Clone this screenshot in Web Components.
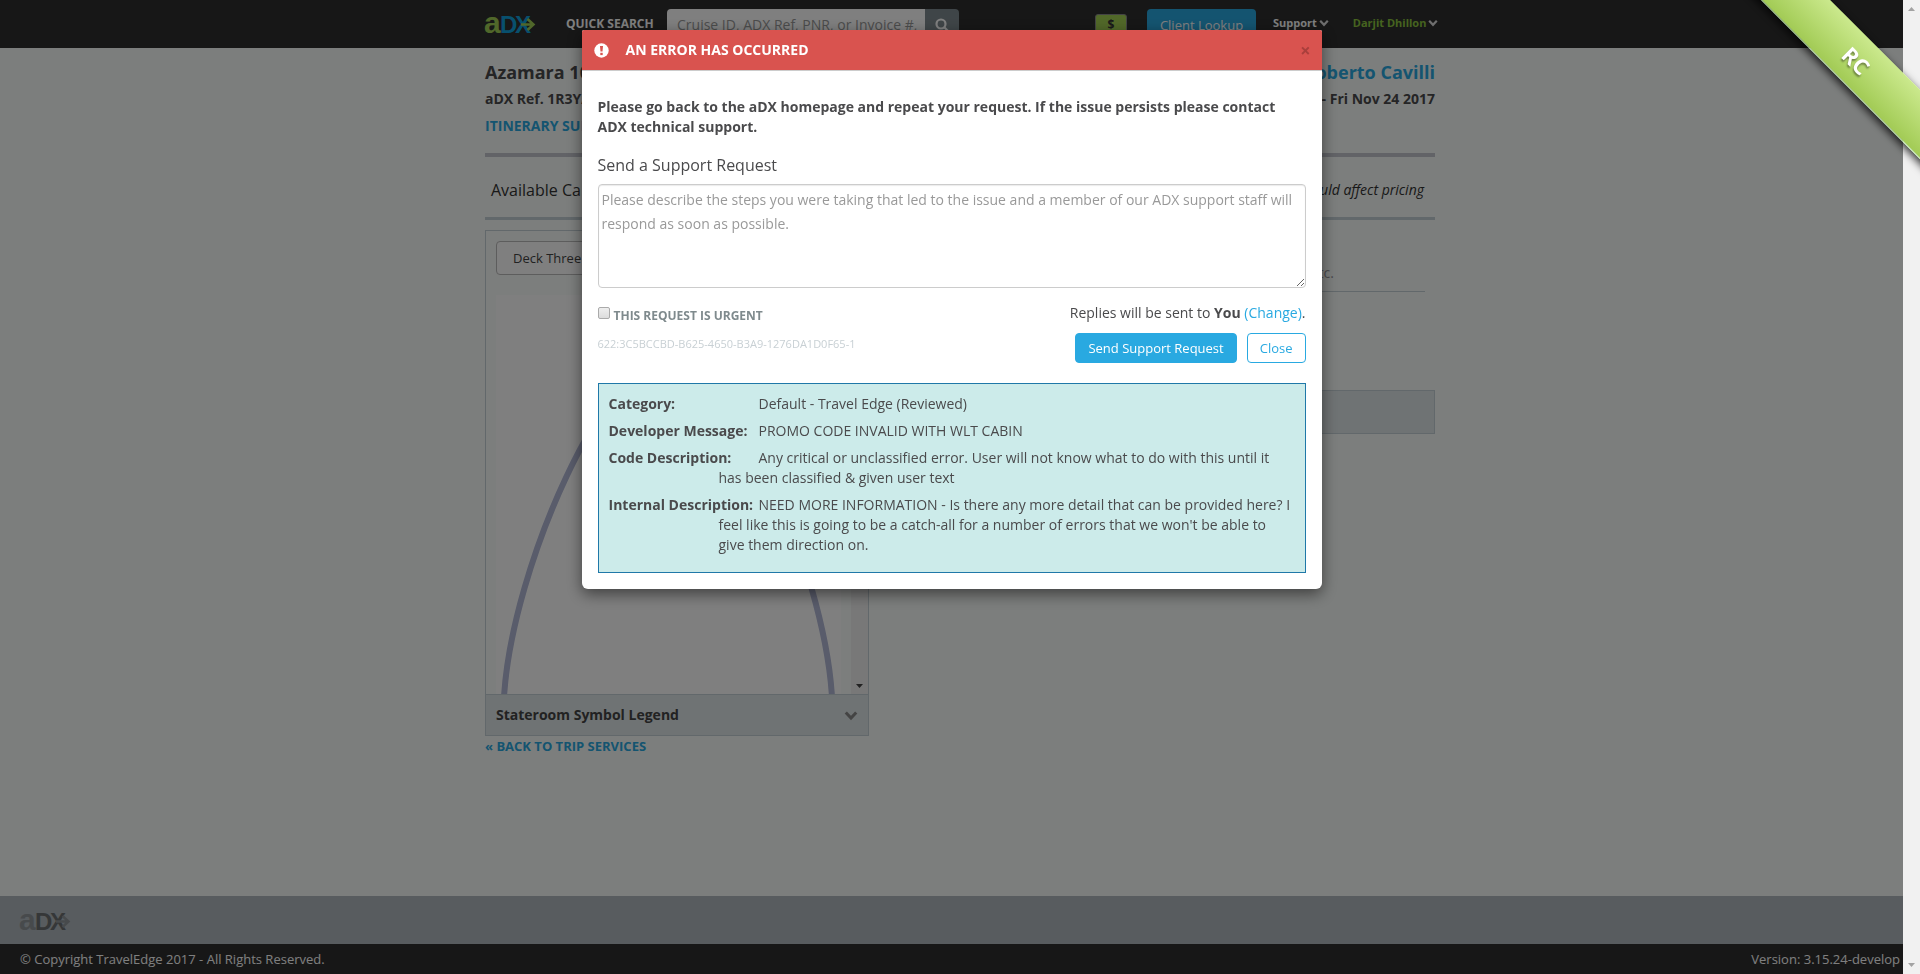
<!DOCTYPE html>
<html lang="en">
<head>
<meta charset="utf-8">
<title>aDX - Cabin Selection</title>
<style>
body{margin:0;background:#f9fcfa;font:14px/20px "Open Sans","Noto Sans",sans-serif;color:#4a4a4c}
</style>
</head>
<body>
<adx-app></adx-app>
<script>
const base = '<style>*{box-sizing:border-box}a{color:#29a9e1;text-decoration:none}button,input,textarea{font:inherit;margin:0}</style>';
function define(name, html) {
  const tpl = document.createElement('template');
  tpl.innerHTML = base + html;
  customElements.define(name, class extends HTMLElement {
    constructor() {
      super();
      this.attachShadow({mode: 'open'}).append(tpl.content.cloneNode(true));
    }
  });
}

define('adx-logo', `
<style>
:host{display:block;flex:none;width:52px;height:20px;--a:var(--logo-a,#a1cf54);--d:var(--logo-d,#10a0dc)}
svg{display:block;overflow:visible;font-family:"Liberation Sans",sans-serif;font-weight:bold}
.a{fill:var(--a)}.d{fill:var(--d)}
path{fill:none;stroke:var(--a);stroke-width:2.5}
</style>
<svg width="52" height="20" role="img" aria-label="aDX"><text class="a" x="-1" y="18" font-size="30">a</text><text class="d" x="15" y="18" font-size="24">D</text><text class="d" x="30" y="18" font-size="24">X</text><path d="M36 9.5H48M42.500 4L48.500 9.500L42.500 15"/></svg>`);

define('adx-chevron', `
<style>:host{display:inline-block;width:10px;height:8px}svg{display:block;width:100%;height:100%}</style>
<svg viewBox="0 0 10 8"><path d="M1.200 1.800L5 5.800L8.800 1.800" fill="none" stroke="currentColor" stroke-width="2.200"/></svg>`);

define('adx-header', `
<style>
:host{display:block;background:#2e2e2e;height:48px}
.bar{width:950px;max-width:100%;margin:0 auto;display:flex;align-items:flex-start;padding-top:9px;color:#fff}
.bar>*{flex:none}
adx-logo{margin-top:6px}
label{margin-left:29px;line-height:30px;width:101px;font-weight:bold;font-size:12px;white-space:nowrap;color:#fff}
input{width:258px;height:31px;border:0;border-radius:4px 0 0 4px;background:#fff;padding:0 0 0 10px;font-size:14px}
input::placeholder{color:#999;opacity:1}
.go{width:34px;height:31px;border:0;border-radius:0 4px 4px 0;background:#7f8b90;padding:0;color:#fff}
.go svg{display:block;margin:auto}
.cash{margin:5px 20px 0 136px;width:32px;height:22px;border:1px solid #888;border-radius:3px;background:#a3d052;color:#333;font-weight:bold;font-size:12px;padding:0}
.client{width:109px;height:31px;border:0;border-radius:4px;background:#29a9e1;color:#fff;font-size:13px;padding:0}
nav{display:flex;gap:24px;margin-left:17px}
nav a{display:flex;align-items:center;gap:2px;color:#fff;font-weight:bold;font-size:11px;line-height:28px;white-space:nowrap}
nav a.user{color:#8cc63f}
nav adx-chevron{color:#ddd}
</style>
<div class="bar">
<adx-logo></adx-logo>
<label for="q">QUICK SEARCH</label>
<input id="q" type="text" placeholder="Cruise ID, ADX Ref, PNR, or Invoice #,">
<button class="go" aria-label="Search"><svg width="14" height="14" viewBox="0 0 14 14" fill="none" stroke="#fff" stroke-width="2.200"><circle cx="6" cy="6" r="4.500"/><path d="M9 9L13 13"/></svg></button>
<button class="cash">$</button>
<button class="client">Client Lookup</button>
<nav><a href="#">Support<adx-chevron></adx-chevron></a><a class="user" href="#">Darjit Dhillon<adx-chevron></adx-chevron></a></nav>
</div>`);

define('adx-booking', `
<style>
:host{display:block}
.row{display:flex;justify-content:space-between;gap:20px}
.title{font-size:18px;line-height:28px;font-weight:bold}
.ref{font-weight:bold;line-height:26px}
.tabs{font-weight:bold;line-height:28px;padding-bottom:13px;border-bottom:4px solid #c4c6ce}
.avail{align-items:center;height:63px;border-bottom:3px solid #c4d0d6;padding:6px 11px 0 6px;color:#333}
h2{margin:0;font-size:16px;font-weight:normal}
</style>
<div class="row title"><span>Azamara 10</span><a href="#">Roberto Cavilli</a></div>
<div class="row ref"><span>aDX Ref. 1R3YA</span><span>- Fri Nov 24 2017</span></div>
<div class="tabs"><a href="#">ITINERARY SUM</a></div>
<div class="row avail"><h2>Available Ca</h2><em>could affect pricing</em></div>`);

define('adx-deck', `
<style>
:host{display:block;border:1px solid #c4d0d6}
.pick{padding:10px 10px 20px}
.pick button{display:block;width:200px;height:34px;border:1px solid #bbb;border-radius:4px;background:#fff;text-align:left;padding:0 16px;font-size:13px;color:#444}
.view{display:flex;justify-content:space-between;padding-left:10px;height:399px}
.view svg{display:block}
.plan{background:#fff}
.track{width:17px;background:#f1f1f1;display:flex;justify-content:center;align-items:flex-end;padding-bottom:6px}
.legend{display:flex;justify-content:space-between;align-items:center;width:100%;height:41px;padding:0 10px;border:0;border-top:1px solid #c4d0d6;background:#dfe6e8;font-weight:bold;color:#444}
adx-chevron{width:14px;height:11px;color:#888}
</style>
<div class="pick"><button>Deck Three</button></div>
<div class="view">
<svg class="plan" width="345" height="399"><path d="M8 402C16 270 112 60 172 60C232 60 328 270 336 402" fill="none" stroke="#b2b8d6" stroke-width="6"/></svg>
<div class="track"><svg width="7" height="4"><path d="M0 0H7L3.500 4Z" fill="#444"/></svg></div>
</div>
<button class="legend">Stateroom Symbol Legend<adx-chevron></adx-chevron></button>`);

define('adx-details', `
<style>
:host{display:block}
p{margin:0 10px 98px 0;padding-bottom:8px;border-bottom:1px solid #c4d0d6;text-align:right;padding-right:91px;color:#96969c}
div{height:44px;border:1px solid #c4d0d6;background:#dfe6e8}
</style>
<p>etc.</p>
<div></div>`);

define('adx-footer', `
<style>
:host{display:block;font-size:13px}
.brand{height:48px;background:#b0b8be;padding:16px 20px;--logo-a:#8f9499;--logo-d:#6b6e70}
.legal{display:flex;justify-content:space-between;height:30px;line-height:30px;background:#2e2e2e;color:#fff;padding:0 20px}
</style>
<div class="brand"><adx-logo></adx-logo></div>
<div class="legal"><span>© Copyright TravelEdge 2017 - All Rights Reserved.</span><span>Version: 3.15.24-develop</span></div>`);

define('adx-field', `
<style>
:host{display:block;padding-left:110px;text-indent:-110px;margin-bottom:7px}
b{display:inline-block;width:150px;text-indent:0}
</style>
<b><slot name="label"></slot></b><slot></slot>`);

define('adx-error-dialog', `
<style>
:host{display:block;width:740px;max-width:100%;background:#fff;border-radius:2px 2px 6px 6px;box-shadow:0 5px 15px rgba(0,0,0,.5)}
header{display:flex;align-items:center;height:41px;background:#d9534f;border-bottom:1px solid #ccc;border-radius:2px 2px 0 0;padding:0 11px 0 12px;color:#fff}
header svg{flex:none}
h1{margin:0 0 0 17px;flex:1;font-size:14px}
.x{border:0;background:none;padding:0;font-size:18px;line-height:20px;height:24px;font-weight:bold;color:#a93f3c}
.body{padding:26px 16px 16px}
.lead{margin:0 0 18px;font-weight:bold}
.ask{display:block;font-size:16px;line-height:20px;margin-bottom:9px}
textarea{display:block;width:100%;height:104px;border:1px solid #ccc;border-radius:4px;padding:3px;line-height:24px;box-shadow:inset 0 1px 1px rgba(0,0,0,.08)}
textarea::placeholder{color:#999;opacity:1}
.foot{display:flex;justify-content:space-between;margin:15px 0 20px}
.urgent{display:flex;gap:4px;font-size:12px;line-height:26px;font-weight:bold;color:#7f8a8d}
.urgent input{appearance:none;width:12px;height:12px;margin-top:4px;border:1px solid #aaa;border-radius:2px;background:linear-gradient(#eee,#dcdcdc)}
.id{margin-top:7px;font-size:11px;line-height:16px;color:#c8d0d4}
.right{text-align:right}
.btns{display:flex;justify-content:flex-end;gap:10px;margin-top:10px}
.btns button{height:30px;border:1px solid #29a9e1;border-radius:4px;background:#fff;color:#29a9e1;font-size:13px;padding:0 12px}
.btns .main{background:#29a9e1;color:#fff}
.info{border:1px solid #1f78a8;background:#ccebea;padding:10px}
</style>
<header>
<svg width="15" height="15" viewBox="0 0 15 15"><circle cx="7.500" cy="7.500" r="7.200" fill="#fff"/><path d="M6 3H9L8.500 8.500H6.500Z" fill="#d9534f"/><rect x="6.300" y="9.800" width="2.400" height="2.300" fill="#d9534f"/></svg>
<h1>AN ERROR HAS OCCURRED</h1>
<button class="x" aria-label="Dismiss">×</button>
</header>
<div class="body">
<p class="lead">Please go back to the aDX homepage and repeat your request. If the issue persists please contact ADX technical support.</p>
<label class="ask" for="msg">Send a Support Request</label>
<textarea id="msg" placeholder="Please describe the steps you were taking that led to the issue and a member of our ADX support staff will respond as soon as possible."></textarea>
<div class="foot">
<div><label class="urgent"><input type="checkbox">THIS REQUEST IS URGENT</label><div class="id">622:3C5BCCBD-B625-4650-B3A9-1276DA1D0F65-1</div></div>
<div class="right">Replies will be sent to <b>You</b> <a href="#">(Change)</a>.
<div class="btns"><button class="main">Send Support Request</button><button>Close</button></div></div>
</div>
<section class="info">
<adx-field><span slot="label">Category:</span>Default - Travel Edge (Reviewed)</adx-field>
<adx-field><span slot="label">Developer Message:</span>PROMO CODE INVALID WITH WLT CABIN</adx-field>
<adx-field><span slot="label">Code Description:</span>Any critical or unclassified error. User will not know what to do with this until it has been classified &amp; given user text</adx-field>
<adx-field><span slot="label">Internal Description:</span>NEED MORE INFORMATION - Is there any more detail that can be provided here? I feel like this is going to be a catch-all for a number of errors that we won't be able to give them direction on.</adx-field>
</section>
</div>`);

define('adx-ribbon', `
<style>
:host{position:fixed;top:0;right:0;width:200px;height:200px;overflow:hidden;pointer-events:none}
div{position:absolute;left:-14px;top:36px;width:300px;height:49px;line-height:49px;transform:rotate(45deg);background:linear-gradient(#cbe98d,#a2cb55);border-bottom:1px solid #b5dca0;box-shadow:0 3px 8px rgba(0,0,0,.8);text-align:center;color:#fff;font-size:22px;font-weight:bold;text-shadow:1px 2px 2px rgba(0,0,0,.4)}
</style>
<div><slot></slot></div>`);

define('adx-scrollbar', `
<style>
:host{display:flex;flex-direction:column;justify-content:space-between;align-items:center;width:17px;background:#f1f1f1;padding:7px 0}
svg{display:block}
</style>
<svg width="7" height="4"><path d="M0 4H7L3.500 0Z" fill="#a3a3a3"/></svg>
<svg width="7" height="4"><path d="M0 0H7L3.500 4Z" fill="#a3a3a3"/></svg>`);

define('adx-app', `
<style>
:host{display:flex;flex-direction:column;min-height:100vh}
main{flex:1;width:950px;max-width:100%;margin:0 auto;padding-top:10px}
.cols{display:flex;justify-content:space-between;align-items:flex-start;gap:20px;padding-top:10px}
adx-deck{width:384px}
adx-details{flex:1;padding-top:33px}
.back{display:block;font-size:13px;font-weight:bold;line-height:20px}
.overlay{position:fixed;inset:0;display:flex}
.shade{flex:1;background:rgba(0,0,0,.5);display:flex;justify-content:center;align-items:flex-start;padding-top:30px}
</style>
<adx-header></adx-header>
<main>
<adx-booking></adx-booking>
<div class="cols"><adx-deck></adx-deck><adx-details></adx-details></div>
<a class="back" href="#">« BACK TO TRIP SERVICES</a>
</main>
<adx-footer></adx-footer>
<div class="overlay"><div class="shade"><adx-error-dialog role="dialog" aria-modal="true"></adx-error-dialog></div><adx-scrollbar></adx-scrollbar></div>
<adx-ribbon>RC</adx-ribbon>`);
</script>
</body>
</html>
